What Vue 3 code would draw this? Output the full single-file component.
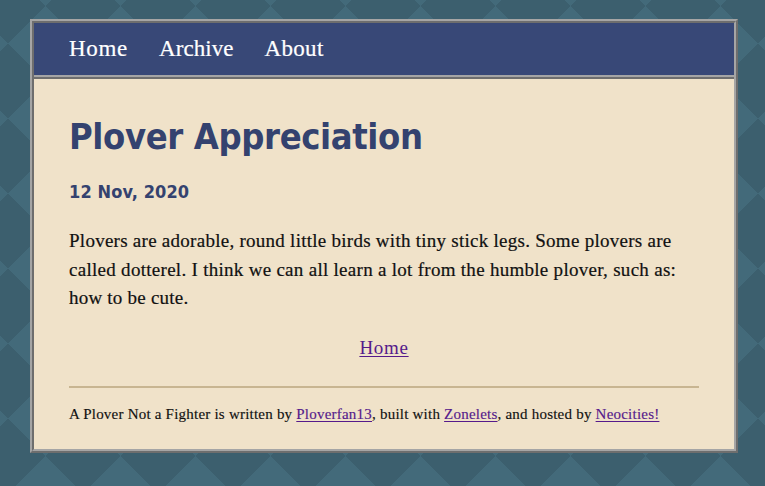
<script setup>
const nav = ['Home', 'Archive', 'About']
</script>

<template>
  <div class="page">
    <div class="frame">
      <div class="container">
        <header class="header">
          <a v-for="item in nav" :key="item" :class="['nav-link', item.toLowerCase()]" href="#">{{ item }}</a>
        </header>
        <main class="content">
          <h1>Plover Appreciation</h1>
          <h4>12 Nov, 2020</h4>
          <p class="body-text">
            <span class="l1">Plovers are adorable, round little birds with tiny stick legs. Some plovers are</span><br>
            <span class="l2">called dotterel. I think we can all learn a lot from the humble plover, such as:</span><br>
            <span class="l3">how to be cute.</span>
          </p>
          <nav class="next"><a href="#">Home</a></nav>
          <footer class="footer">A Plover Not a Fighter is written by <a href="#">Ploverfan13</a>, built with <a href="#">Zonelets</a>, and hosted by <a href="#">Neocities!</a></footer>
        </main>
      </div>
    </div>
  </div>
</template>

<style>
body {
  margin: 0;
}
</style>

<style scoped>
.page {
  box-sizing: border-box;
  height: 486px;
  padding: 19px 27px 33px 30px;
  overflow: hidden;
  background-color: #436a7a;
  background-image:
    linear-gradient(45deg, #3c5f6e 25%, transparent 25%, transparent 75%, #3c5f6e 75%),
    linear-gradient(-45deg, #3c5f6e 25%, transparent 25%, transparent 75%, #3c5f6e 75%);
  background-size: 75px 75px;
  background-position: 8px 6px;
  font-family: "Liberation Serif", serif;
  color: #111;
}
.frame {
  border: 2px solid;
  border-color: #a5a5a5 #6e6e6e #6e6e6e #a5a5a5;
}
.container {
  box-sizing: border-box;
  height: 430px;
  border: 2px solid;
  border-color: #6e6e6e #a5a5a5 #a5a5a5 #6e6e6e;
  background: #f0e2c9;
}
.header {
  box-sizing: border-box;
  height: 54px;
  padding: 0 35px;
  display: flex;
  gap: 31px;
  background: #384877;
  border-bottom: 2px solid #a5a5a5;
}
.nav-link {
  text-decoration: none;
  font-size: 23px;
  line-height: 51px;
  letter-spacing: 0.35px;
  white-space: nowrap;
  -webkit-text-stroke: 0.2px;
}
.home {
  letter-spacing: 0.7px;
}
.archive {
  letter-spacing: 0.05px;
}
.content {
  border-top: 2px solid #6e6e6e;
  padding: 35px 35px 0;
}
h1, h4 {
  margin: 0;
  color: #34426f;
  font-family: "DejaVu Sans Condensed", "DejaVu Sans", sans-serif;
  font-stretch: condensed;
  font-weight: bold;
  white-space: nowrap;
}
h1 {
  font-size: 36px;
  line-height: 46px;
  letter-spacing: -0.38px;
}
h4 {
  margin-top: 20px;
  font-size: 18px;
  line-height: 24px;
  letter-spacing: 0.12px;
}
.body-text {
  margin: 23px 0 0;
  font-size: 19px;
  line-height: 28.5px;
  white-space: nowrap;
  -webkit-text-stroke: 0.2px;
}
.l1 {
  letter-spacing: 0.265px;
}
.l2 {
  letter-spacing: 0.285px;
}
.l3 {
  letter-spacing: 0.22px;
}
a {
  color: #551a8b;
  text-underline-offset: 2px;
  text-decoration-thickness: 1px;
}
a.nav-link {
  color: #fff;
}
.next {
  margin-top: 21px;
  text-align: center;
  font-size: 19px;
  line-height: 28px;
  letter-spacing: 0.7px;
}
.footer {
  margin-top: 24px;
  padding-top: 14px;
  border-top: 2px solid #c8b591;
  font-size: 15px;
  line-height: 24px;
  letter-spacing: 0.22px;
  white-space: nowrap;
  -webkit-text-stroke: 0.15px;
}
</style>
